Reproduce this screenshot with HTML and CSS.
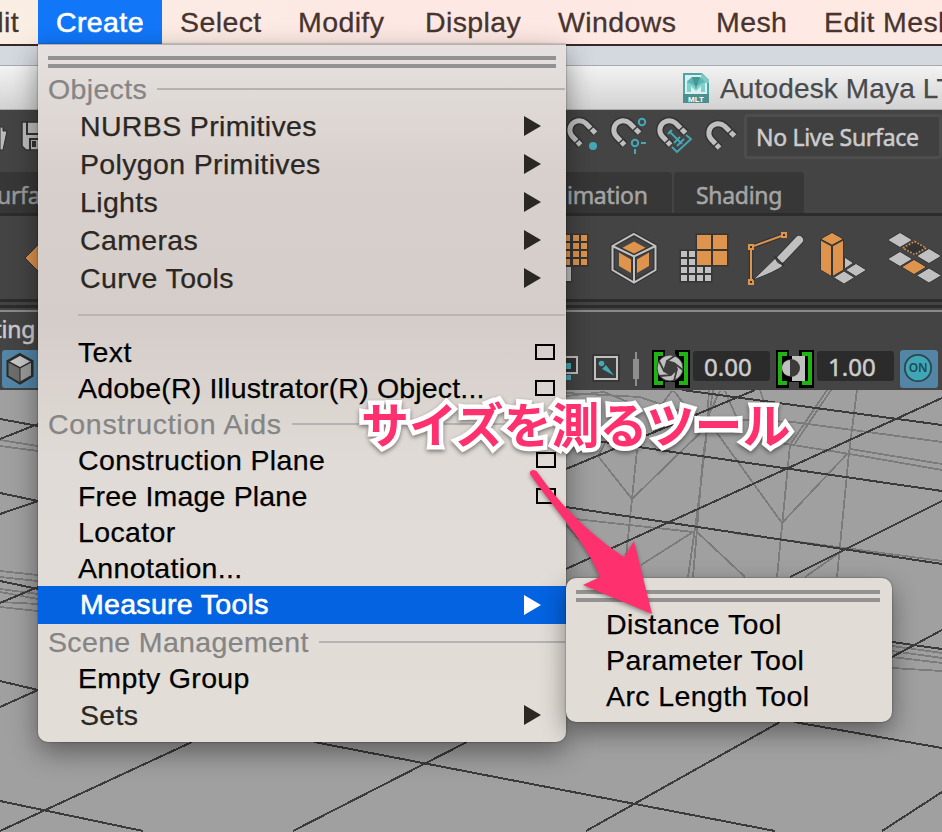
FILE: index.html
```html
<!DOCTYPE html>
<html lang="en">
<head>
<meta charset="utf-8">
<title>Autodesk Maya LT</title>
<link rel="stylesheet" href="styles.css">
</head>
<body>
<div class="screen">
  <nav class="menubar">
    <span class="mb-edit">Edit</span>
    <span class="mb-create">Create</span>
    <span class="mb-select">Select</span>
    <span class="mb-modify">Modify</span>
    <span class="mb-display">Display</span>
    <span class="mb-windows">Windows</span>
    <span class="mb-mesh">Mesh</span>
    <span class="mb-editmesh">Edit Mesh</span>
  </nav>
  <div class="desktop-strip"></div>
  <header class="titlebar">
    <svg class="doc-icon" viewBox="0 0 26 30" width="26" height="30">
      <path d="M0 0H19L26 7V30H0Z" fill="#4fa5a3"/>
      <path d="M0 21H26V30H0Z" fill="#4b8f8f"/>
      <path d="M2 2H18L24 8V21H2Z" fill="#d8f0ef"/>
      <path d="M18 0L26 7V10H18Z" fill="#7cc9c6"/>
      <path d="M4 19V8L9 4H17L22 9V19H18V13L13 18L8 13V19Z" fill="#7fcfcb"/>
      <path d="M9 4L13 16L17 4Z" fill="#4f9c9a"/><path d="M4 9L13 13L22 9L17 4H9Z" fill="#389390" opacity=".45"/>
      <text x="13" y="28.5" text-anchor="middle" class="mlt">MLT</text>
    </svg>
    <span class="title-text">Autodesk Maya LT</span>
  </header>

  <div class="statusline split">
    <svg viewBox="0 110 38 62" width="38" height="62">
      <path d="M0 127H3V131H7L3 150H0Z" fill="#bbb" stroke="#2c2c2c"/>
      <path d="M22 122H44V150H26L22 146Z" fill="#bdbdbd" stroke="#333" stroke-width="1.5"/>
      <path d="M27 121V134H40M30 150V139H40M33 142H35V146H33Z" fill="none" stroke="#333" stroke-width="2"/>
    </svg>
    <div class="cell">
      <svg viewBox="566 110 176 62" width="176" height="62">
        <defs>
          <g id="magnet">
            <path d="M719.5 148L711 139A9.4 9.4 0 0 1 724.5 126L734.5 136" fill="none" stroke="#333" stroke-width="8"/>
            <path d="M719.5 148L711 139A9.4 9.4 0 0 1 724.5 126L734.5 136" fill="none" stroke="#bfbfbf" stroke-width="5"/>
            <path d="M713 147L719.5 141M727 134.5L733.5 128.5" stroke="#3a3a3a" stroke-width="1.6"/>
          </g>
        </defs>
        <use href="#magnet" x="-139" y="-3"/><circle cx="593" cy="146" r="4" fill="#43a9b8"/>
        <use href="#magnet" x="-95" y="-3"/>
        <g fill="none" stroke="#43a9b8" stroke-width="2"><circle cx="642" cy="122" r="3.2"/><circle cx="635" cy="143" r="3.2"/><path d="M641 143H646M635 149V154"/></g>
        <use href="#magnet" x="-49" y="-3"/>
        <path d="M686 135L691 139L677 152L672 147M669 131L682 144M674 143L680 137M668 134L672 130M677 146L684 139" fill="none" stroke="#43a9b8" stroke-width="1.8"/>
        <use href="#magnet"/>
      </svg>
      <div class="live">No Live Surface</div>
    </div>
  </div>

  <div class="tabs split">
    <div class="tab tab-left">urfac</div>
    <div class="cell">
      <div class="tab tab-anim">imation</div>
      <div class="tab tab-shade">Shading</div>
    </div>
  </div>

  <div class="shelf split">
    <svg viewBox="0 216 38 83" width="38" height="83"><path d="M25 258L41 242V274Z" fill="#df944d" stroke="#333"/></svg>
    <svg viewBox="566 216 376 83" width="376" height="83">
      <path d="M560 233.500H588.500V267H572V282.500H560Z" fill="#363636"/>
      <path fill="#df944d" d="M564 235h6v6h-6zM573 235h6v6h-6zM581 235h6v6h-6zM564 243h6v6h-6zM573 243h6v6h-6zM581 243h6v6h-6zM564 251h6v6h-6zM573 251h6v6h-6zM581 251h6v6h-6zM564 259h6v6h-6zM573 259h6v6h-6zM581 259h6v6h-6z"/>
      <path d="M564 267h7v14h-7z" fill="#bfbfbf"/>
      <g>
        <path d="M634 234L655.500 246V270L634 282.500L612.500 270V246ZM612.500 246L634 256.500L655.500 246M634 256.500V282" fill="none" stroke="#353535" stroke-width="4.500"/>
        <path d="M634 234L655.500 246V270L634 282.500L612.500 270V246ZM612.500 246L634 256.500L655.500 246M634 256.500V282" fill="none" stroke="#c2c2c2" stroke-width="2"/>
        <path d="M634 241.500L645.500 247.700L634 253.500L622.500 247.700ZM619 252.500L631 259.500V273L619 266ZM649 252.500L637 259.500V273L649 266Z" fill="#df944d"/>
      </g>
      <path d="M679.500 249.500H695.500V233.500H728.500V266.500H712.500V282.500H679.500Z" fill="#363636"/>
      <path d="M697 235h14v14h-14zM713 235h14v14h-14zM697 251h14v14h-14zM713 251h14v14h-14z" fill="#df944d"/>
      <path d="M681 251h6v6h-6zM689 251h6v6h-6zM681 259h6v6h-6zM689 259h6v6h-6zM681 267h6v6h-6zM689 267h6v6h-6zM697 267h6v6h-6zM705 267h6v6h-6zM681 275h6v6h-6zM689 275h6v6h-6zM697 275h6v6h-6zM705 275h6v6h-6z" fill="#c0c0c0"/>
      <path d="M751 282V247L784 235" fill="none" stroke="#353535" stroke-width="4.500"/>
      <path d="M751 282V247L784 235" fill="none" stroke="#df944d" stroke-width="2"/>
      <path d="M749 245h4v4h-4zM782 233h4v4h-4zM749 280h4v4h-4z" fill="#333" stroke="#df944d" stroke-width="2"/>
      <path d="M753 280L775 258.500L783 266Q775 272 753 280Z" fill="#c0c0c0" stroke="#353535"/>
      <path d="M781 259L799 240" stroke="#353535" stroke-width="10" stroke-linecap="round"/>
      <path d="M781 259L799 240" stroke="#c0c0c0" stroke-width="8" stroke-linecap="round"/>
      <path d="M774 256L784 266" stroke="#353535" stroke-width="2"/>
      <g stroke="#363636" stroke-width="1">
        <path d="M844.500 257L853.500 263L844.500 269ZM856 263.500L866.500 270L856 276.500L845.500 270ZM844 271L854.500 277.500L844 284L833.500 277.500Z" fill="#c0c0c0"/>
        <path d="M832 232.500L843.500 239L832 245.200L820.500 239ZM820.500 240L831.500 246V276.500L820.500 270ZM843.500 240L832.500 246V276.500L843.500 270Z" fill="#df944d"/>
        <path d="M900 232.500L912.500 240L900 247.500L887.500 240ZM929 248.500L941.500 256L929 263.500L916.500 256ZM900 251.500L912.500 259L900 266.500L887.500 259ZM929 268L941.500 275.500L929 283L916.500 275.500Z" fill="#c0c0c0"/>
        <path d="M914 259.500L926.500 267L914 274.500L901.500 267Z" fill="#df944d"/>
      </g>
      <path d="M914.600 241.500L926 248L914.600 254.500L903 248Z" fill="#333" stroke="#df944d" stroke-width="1.600" stroke-dasharray="1.600 1.700"/>
    </svg>
  </div>
  <div class="divider"></div>
  <div class="panel-menu">Lighting</div>
  <div class="panel-tools split">
    <svg viewBox="0 350 38 40" width="38" height="40">
      <rect x="2" y="350" width="50" height="38" rx="3" fill="#5285a6"/>
      <path d="M20 354L32.500 361V376L20 383.500L7.500 376V361Z" fill="#6d6d6d" stroke="#2b2b2b" stroke-width="2"/>
      <path d="M20 355L32 361.500L20 368L8 361.500Z" fill="#c6c6c6" stroke="#2b2b2b" stroke-width="1.500"/>
      <path d="M20 368L31.500 362V375.500L20 382Z" fill="#9b9b9b" stroke="#2b2b2b"/>
    </svg>
    <div class="cell tools-right">
      <svg viewBox="566 350 127 40" width="127" height="40">
        <path d="M560 357H577V373H560" fill="#333" stroke="#c0c0c0" stroke-width="2"/>
        <path d="M560 363h11v6h-11zM560 375h11v5h-11z" fill="#43a9b8"/>
        <rect x="592" y="354" width="28" height="28" fill="#373737"/>
        <rect x="595" y="357" width="22" height="22" fill="#3b3b3b" stroke="#c0c0c0" stroke-width="2"/>
        <circle cx="601.500" cy="363.500" r="2.800" fill="#43a9b8"/><path d="M602 369L606 365L614 375.500Z" fill="#43a9b8"/>
        <path d="M635 352h2v7h2v20h-2v7h-2v-7h-2v-20h2z" fill="#8e8e8e"/>
        <path d="M652 350H665V356H675V350H690V388H675V382H665V388H652Z" fill="#000"/>
        <path d="M663 354H656V383H663M679 354H686V383H679" fill="none" stroke="#20b314" stroke-width="4"/>
        <circle cx="670" cy="368" r="13" fill="#c0c0c0" stroke="#444"/>
        <path d="M667 361L674 363L677 369L671 375L664 371ZM667 361L676 355M674 363L683 370M677 369L674 381M671 375L660 376M664 371L659 361" fill="#3d3d3d" stroke="#3d3d3d" stroke-width="1.800"/>
      </svg>
      <div class="field">0.00</div>
      <svg viewBox="770 350 47 40" width="47" height="40">
        <path d="M776 350H789V356H799V350H814V388H799V382H789V388H776Z" fill="#000"/>
        <path d="M787 354H780V383H787M802 354H810V383H802" fill="none" stroke="#20b314" stroke-width="4"/>
        <path d="M792 356H805V381H792Z" fill="#c0c0c0"/>
        <circle cx="791" cy="368" r="9" fill="#3b3b3b"/>
        <path d="M790 360A8 8 0 0 0 790 376Z" fill="#c0c0c0"/>
      </svg>
      <div class="field">1.00</div>
      <svg class="on" viewBox="900 350 38 38" width="38" height="38">
        <rect x="900" y="350" width="38" height="38" rx="3" fill="#5285a6"/>
        <circle cx="918" cy="368" r="13.200" fill="#3fa6b5" stroke="#2f464c" stroke-width="1.800"/>
        <text x="918" y="372.300" text-anchor="middle" class="on-text">ON</text>
      </svg>
    </div>
  </div>
  <svg class="viewport" viewBox="0 390 942 442" width="942" height="442" shape-rendering="crispEdges">
    <g fill="none" stroke="#7b7b7b" stroke-width="1.800">
      <path d="M0 440L38 446M0 446L38 451M0 571L38 575M0 577L38 581M0 589L38 594M0 592L38 599M0 602L38 604M0 607L38 611"/>
      <path d="M566 393L640 397L700 418L793 422L942 442M566 396L604 392L628 402L598 456L632 499L700 433L720 391M637 450L624 577M672 391L650 420M674 391L700 425"/>
      <path d="M709 390L706 440L698 507L688 577M713 390L703 457L693 577M717 433L782 523L848 453M725 391L742 430"/>
      <path d="M760 390L765 405M827 390L790 445L777 577M831 390L794 445M857 390L849 453L837 577"/>
      <path d="M780 443L850 454L942 470M850 449L942 464M566 518L693 532L641 565M697 532L745 577M733 533L942 561M805 577L845 549M566 525L580 540M892 646L942 653M892 651L942 658M892 657L942 663M892 668L942 671"/>
    </g>
    <g fill="none" stroke="#3b3b3b" stroke-width="2">
      <path d="M0 419L38 426M0 439L38 424M0 493L38 501M0 514L38 501M0 581L38 589M0 603L38 587M0 681L38 690M0 707L38 690"/>
      <path d="M0 801L143 831M0 831L192 742M314 742L775 831M293 831L467 742M586 831L780 722M794 722L942 748M882 831L942 792"/>
      <path d="M566 469L755 390M566 569L942 398M566 507L942 564M590 440L942 491M682 390L942 425M790 577L942 501M892 642L942 649M892 657L942 630"/>
    </g>
  </svg>
</div>

<div class="menu">
  <div class="tear"></div>
  <div class="head">Objects</div>
  <div class="item sub tinted"><span>NURBS Primitives</span><i class="tri"></i></div>
  <div class="item sub tinted"><span>Polygon Primitives</span><i class="tri"></i></div>
  <div class="item sub tinted"><span>Lights</span><i class="tri"></i></div>
  <div class="item sub tinted"><span>Cameras</span><i class="tri"></i></div>
  <div class="item sub tinted"><span>Curve Tools</span><i class="tri"></i></div>
  <div class="sep"></div>
  <div class="item"><span>Text</span><i class="box"></i></div>
  <div class="item long"><span>Adobe(R) Illustrator(R) Object...</span><i class="box"></i></div>
  <div class="head wide">Construction Aids</div>
  <div class="item"><span>Construction Plane</span><i class="box box-r"></i></div>
  <div class="item long"><span>Free Image Plane</span><i class="box box-r"></i></div>
  <div class="item"><span>Locator</span></div>
  <div class="item"><span>Annotation...</span></div>
  <div class="item sub active"><span>Measure Tools</span><i class="tri"></i></div>
  <div class="head">Scene Management</div>
  <div class="item"><span>Empty Group</span></div>
  <div class="item sub tinted"><span>Sets</span><i class="tri"></i></div>
</div>

<div class="submenu">
  <div class="tear"></div>
  <div class="item"><span>Distance Tool</span></div>
  <div class="item"><span>Parameter Tool</span></div>
  <div class="item"><span>Arc Length Tool</span></div>
</div>

<svg class="arrow" viewBox="520 460 150 170" width="150" height="170">
  <path d="M530 474C529 470 535 468 538 473C560 505 592 536 624 557L634 541L652 614L583 585L600 577C585 540 553 508 530 474Z" fill="#ff306e"/>
</svg>
<div class="note" lang="ja">サイズを測るツール</div>
</body>
</html>
```
FILE: styles.css
```css
* { box-sizing: border-box; }
html, body { margin: 0; width: 942px; height: 832px; overflow: hidden; }
body { position: relative; font-family: "Liberation Sans", Arial, sans-serif; font-size: 28.5px; }
svg { display: block; flex: none; }

.screen { display: flex; flex-direction: column; width: 942px; height: 832px; background: #444; overflow: hidden; }

.menubar { display: flex; height: 44px; flex: none; background: linear-gradient(90deg, #faeee3, #fde8e4 40%, #ffe9e3); color: #47342f; line-height: 44px; white-space: nowrap; letter-spacing: .4px; -webkit-text-stroke: .3px; }
.menubar span { flex: none; }
.mb-edit { width: 38px; display: flex; justify-content: flex-end; padding-right: 19px; }
.mb-create { width: 124px; padding-left: 18px; background: #1176f8; color: #fff; -webkit-text-stroke: .6px #fff; }
.mb-select { width: 136px; padding-left: 18px; }
.mb-modify { width: 127px; }
.mb-display { width: 133px; }
.mb-windows { width: 158px; }
.mb-mesh { width: 108px; }

.desktop-strip { height: 22px; flex: none; background: #d4d9df; border-top: 2px solid #3a2626; border-bottom: 1px solid #a5abad; }
.titlebar { display: flex; align-items: center; height: 44px; flex: none; padding-left: 683px; gap: 11px; background: linear-gradient(#f3f3f3, #d2d2d2); border-bottom: 1px solid #aaa; color: #4a4a4a; white-space: nowrap; }
.title-text { font-size: 28px; letter-spacing: .15px; padding-top: 2px; -webkit-text-stroke: .25px; }
.mlt { font: bold 8px "Liberation Sans", sans-serif; fill: #fff; }

.split { display: grid; grid-template-columns: 566px 376px; flex: none; }
.cell { display: flex; }

.statusline, .tabs, .panel-menu, .panel-tools { font-family: "Noto Sans", sans-serif; font-size: 23px; letter-spacing: -.3px; -webkit-text-stroke: .5px; }
.statusline { height: 62px; }
.live { width: 220px; height: 45px; margin: 4px 0 0 2px; padding-left: 9px; border: 3px solid #4d4d4d; border-radius: 4px; background: #404040; color: #ccc; line-height: 41px; white-space: nowrap; }

.tabs { height: 44px; border-bottom: 3px solid #2c2c2c; color: #a5a5a5; }
.tab { height: 41px; line-height: 47px; background: #373737; }
.tab-left { color: #999; text-indent: -3px; }
.tab-anim { width: 106px; padding-left: 1px; margin-right: 2px; border-radius: 0 4px 0 0; }
.tab-shade { width: 130px; text-align: center; border-radius: 4px 4px 0 0; }

.shelf { height: 83px; }
.divider { height: 13px; flex: none; background: linear-gradient(#2c2c2c 0 3px, #444 3px 6px, #2c2c2c 6px 9px, #444 9px 11px, #8a8a8a 11px); }
.panel-menu { display: flex; justify-content: flex-end; width: 35px; height: 38px; flex: none; line-height: 35px; color: #ccc; }
.panel-tools { height: 40px; }
.field { width: 77px; height: 30px; margin-top: 1px; padding-left: 11px; border-radius: 3px; background: #2b2b2b; color: #ccc; font-size: 24px; letter-spacing: 0; line-height: 32px; }
.on { margin-left: 6px; }
.on-text { font: 600 12px "Noto Sans", sans-serif; fill: #1f4a55; -webkit-text-stroke: 0; }
.viewport { background: #a0a0a0; }

.menu { position: absolute; left: 38px; top: 44px; width: 528px; height: 698px; padding-top: 12px; background: linear-gradient(#e6e1df, #d8d0cc 18%, #d5cdc9 40%, #e0dbd6 60%, #e2ddd7); border-top: 1px solid #b5b0ad; border-radius: 0 0 10px 10px; box-shadow: 0 10px 28px rgba(0,0,0,.42), 0 0 2px rgba(0,0,0,.5); letter-spacing: .35px; color: #000; white-space: nowrap; -webkit-text-stroke: .25px; }
.tear { height: 12px; margin: -1px 10px 3px; border: solid #929292; border-width: 4px 0; }
.item { display: flex; align-items: center; height: 36px; padding: 0 11px 0 40px; }
.item span { flex: 1; }
.long { letter-spacing: .18px; }
.sub { height: 38px; padding: 0 25px 0 42px; }
.tinted { color: #2b2723; }
.active { background: #0463e1; color: #fff; -webkit-text-stroke: .6px #fff; letter-spacing: .3px; }
.active span { margin-top: -2px; }
.tri { width: 17px; height: 20px; background: currentColor; clip-path: polygon(0 0, 100% 50%, 0 100%); }
.box { width: 20px; height: 16px; border: 2px solid #000; }
.box-r { margin-right: -1px; }
.head { display: flex; align-items: center; height: 36px; padding: 0 1px 0 10px; gap: 10px; color: #858585; }
.head::after { content: ""; flex: 1; height: 2px; background: #b5b3b1; margin-top: -1px; }
.wide { letter-spacing: .7px; }
.sep { height: 37px; padding: 17px 1px 0 40px; }
.sep::after { content: ""; display: block; height: 2px; background: #b9b5b2; }

.submenu { position: absolute; left: 566px; top: 578px; width: 326px; height: 144px; padding-top: 13px; background: #e2dcd7; border-radius: 10px; box-shadow: 0 10px 26px rgba(0,0,0,.42), 0 0 2px rgba(0,0,0,.5); letter-spacing: .4px; white-space: nowrap; -webkit-text-stroke: .25px; }
.submenu .tear { margin: -1px 12px 4px 10px; }

.arrow { position: absolute; left: 520px; top: 460px; filter: drop-shadow(0 2px 2px rgba(0,0,0,.4)); }
.note { position: absolute; left: 361px; top: 387px; font: bold 48px/70px "Noto Sans CJK JP", sans-serif; color: #ff306e; white-space: nowrap; -webkit-text-stroke: 9px #fff; paint-order: stroke fill; filter: drop-shadow(0 2px 2px rgba(0,0,0,.45)); }
```
